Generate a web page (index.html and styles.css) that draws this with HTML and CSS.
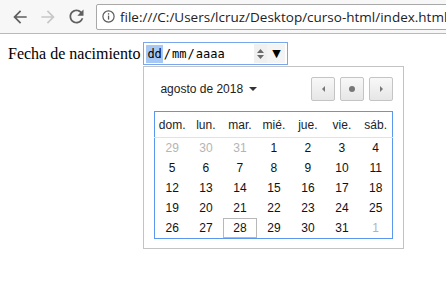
FILE: index.html
```html
<!DOCTYPE html>
<html lang="es">
<head>
    <meta charset="UTF-8">
    <meta name="viewport" content="width=device-width, initial-scale=1.0">
    <title>curso-html</title>
    <link rel="stylesheet" href="styles.css">
</head>
<body>
    <div class="toolbar">
        <span class="nav-btn">
            <svg width="20" height="20" viewBox="0 0 24 24"><path fill="#5f5f5f" d="M20 11H7.83l5.59-5.59L12 4l-8 8 8 8 1.41-1.41L7.83 13H20v-2z"/></svg>
        </span>
        <span class="nav-btn">
            <svg width="20" height="20" viewBox="0 0 24 24"><path fill="#c8c8c8" d="M4 11h12.17l-5.59-5.59L12 4l8 8-8 8-1.41-1.41L16.17 13H4v-2z"/></svg>
        </span>
        <span class="nav-btn">
            <svg width="21" height="21" viewBox="0 0 24 24"><path fill="#5f5f5f" d="M17.65 6.35C16.2 4.9 14.21 4 12 4c-4.42 0-7.99 3.58-7.99 8s3.57 8 7.99 8c3.73 0 6.84-2.55 7.73-6h-2.08c-.82 2.33-3.04 4-5.65 4-3.31 0-6-2.69-6-6s2.69-6 6-6c1.66 0 3.14.69 4.22 1.78L13 11h7V4l-2.35 2.35z"/></svg>
        </span>
        <div class="omnibox">
            <svg class="info" width="13" height="13" viewBox="0 0 13 13">
                <circle cx="6.5" cy="6.5" r="5.6" fill="none" stroke="#5a5a5a" stroke-width="1.2"/>
                <rect x="5.9" y="5.6" width="1.3" height="4" fill="#5a5a5a"/>
                <rect x="5.9" y="3.2" width="1.3" height="1.4" fill="#5a5a5a"/>
            </svg>
            <span class="url">file:///C:/Users/lcruz/Desktop/curso-html/index.html</span>
        </div>
    </div>

    <div class="page">
        <form class="field-row">
            <label for="birth">Fecha de nacimiento</label>
            <div class="date-wrap">
                <div class="date-field" id="birth">
                    <span class="seg selected">dd</span><span class="sep">/</span><span class="seg">mm</span><span class="sep">/</span><span class="seg">aaaa</span>
                    <span class="spin">
                        <svg width="9" height="14" viewBox="0 0 9 14">
                            <path fill="#6b6b6b" d="M4.5 2 8 6H1z"/>
                            <path fill="#6b6b6b" d="M4.5 12 8 8H1z"/>
                        </svg>
                    </span>
                    <span class="drop">&#9660;</span>
                </div>

                <div class="picker">
                    <div class="picker-head">
                        <span class="month">agosto de 2018 <span class="caret"></span></span>
                        <div class="picker-nav">
                            <span class="pbtn"><span class="tri-left"></span></span>
                            <span class="pbtn"><span class="dot"></span></span>
                            <span class="pbtn"><span class="tri-right"></span></span>
                        </div>
                    </div>
                    <table class="days">
                        <thead>
                            <tr><th>dom.</th><th>lun.</th><th>mar.</th><th>mié.</th><th>jue.</th><th>vie.</th><th>sáb.</th></tr>
                        </thead>
                        <tbody>
                            <tr><td class="other">29</td><td class="other">30</td><td class="other">31</td><td>1</td><td>2</td><td>3</td><td>4</td></tr>
                            <tr><td>5</td><td>6</td><td>7</td><td>8</td><td>9</td><td>10</td><td>11</td></tr>
                            <tr><td>12</td><td>13</td><td>14</td><td>15</td><td>16</td><td>17</td><td>18</td></tr>
                            <tr><td>19</td><td>20</td><td>21</td><td>22</td><td>23</td><td>24</td><td>25</td></tr>
                            <tr><td>26</td><td>27</td><td class="today">28</td><td>29</td><td>30</td><td>31</td><td class="other">1</td></tr>
                        </tbody>
                    </table>
                </div>
            </div>
        </form>
    </div>
</body>
</html>
```

FILE: styles.css
```css
html, body {
    min-height: 100%;
}
body {
    margin: 0;
    min-height: 281px;
    background: #fff;
    font-family: "Liberation Serif", serif;
    font-size: 16px;
    color: #000;
}
.toolbar {
    height: 33px;
    display: flex;
    align-items: center;
    padding-left: 6px;
    background: #f7f7f7;
    border-bottom: 1px solid #b9b9b9;
    overflow: hidden;
}
.nav-btn {
    flex: none;
    width: 28px;
    height: 22px;
    display: flex;
    align-items: center;
    justify-content: center;
}
.omnibox {
    flex: none;
    width: 400px;
    height: 24px;
    margin-left: 6px;
    display: flex;
    align-items: center;
    background: #fff;
    border: 1px solid #a8a8a8;
    border-radius: 2px;
}
.info {
    flex: none;
    margin-left: 5px;
    margin-right: 5px;
}
.url {
    font-family: "Open Sans", sans-serif;
    font-size: 13.5px;
    color: #222;
    white-space: nowrap;
}
.page {
    padding: 8px;
}
.field-row {
    display: flex;
    align-items: center;
    gap: 3px;
}
.date-wrap {
    position: relative;
}
.date-field {
    width: 141px;
    height: 21px;
    display: flex;
    align-items: center;
    border: 1px solid #7ba5ec;
    font-family: "DejaVu Sans Mono", monospace;
    font-size: 12px;
    color: #000;
    padding-left: 2px;
}
.seg.selected {
    background: #a7c7f4;
    padding: 2px 1px;
}
.sep {
    padding: 0 1px;
}
.spin {
    margin-left: auto;
    width: 13px;
    height: 19px;
    display: flex;
    align-items: center;
    justify-content: center;
    background: #f0f0f0;
}
.drop {
    width: 18px;
    height: 19px;
    display: flex;
    align-items: center;
    justify-content: center;
    background: #f4f4f4;
    font-family: "DejaVu Sans", sans-serif;
    font-size: 11px;
    margin-right: 2px;
}
.picker {
    position: absolute;
    left: 0;
    top: 24px;
    width: 239px;
    height: 161px;
    padding: 10px;
    background: #fff;
    border: 1px solid #c3c3c3;
    font-family: "Liberation Sans", Arial, sans-serif;
    font-size: 12px;
}
.picker-head {
    height: 24px;
    display: flex;
    align-items: center;
    justify-content: space-between;
    margin-bottom: 10px;
}
.month {
    margin-left: 6px;
    display: flex;
    align-items: center;
    color: #222;
}
.caret {
    margin-left: 6px;
    border-left: 4px solid transparent;
    border-right: 4px solid transparent;
    border-top: 4px solid #333;
}
.picker-nav {
    display: flex;
    gap: 5px;
}
.pbtn {
    width: 22px;
    height: 22px;
    display: flex;
    align-items: center;
    justify-content: center;
    border: 1px solid #c4c4c4;
    border-radius: 2px;
    background: linear-gradient(#f8f8f8, #e6e6e6);
}
.tri-left {
    border-top: 3px solid transparent;
    border-bottom: 3px solid transparent;
    border-right: 3px solid #777;
}
.tri-right {
    border-top: 3px solid transparent;
    border-bottom: 3px solid transparent;
    border-left: 3px solid #777;
}
.dot {
    width: 6px;
    height: 6px;
    border-radius: 50%;
    background: #777;
}
.days {
    width: 239px;
    border: 1px solid #5b96ef;
    border-collapse: collapse;
    table-layout: fixed;
}
.days th {
    height: 25px;
    padding: 0;
    font-weight: normal;
    color: #222;
    border-bottom: 1px solid #e2e2e2;
}
.days td {
    height: 20px;
    padding: 0;
    text-align: center;
    color: #111;
}
.days td.other {
    color: #b4b4b4;
}
.days td.today {
    box-shadow: inset 0 0 0 1px #b8b8b8;
}
```
